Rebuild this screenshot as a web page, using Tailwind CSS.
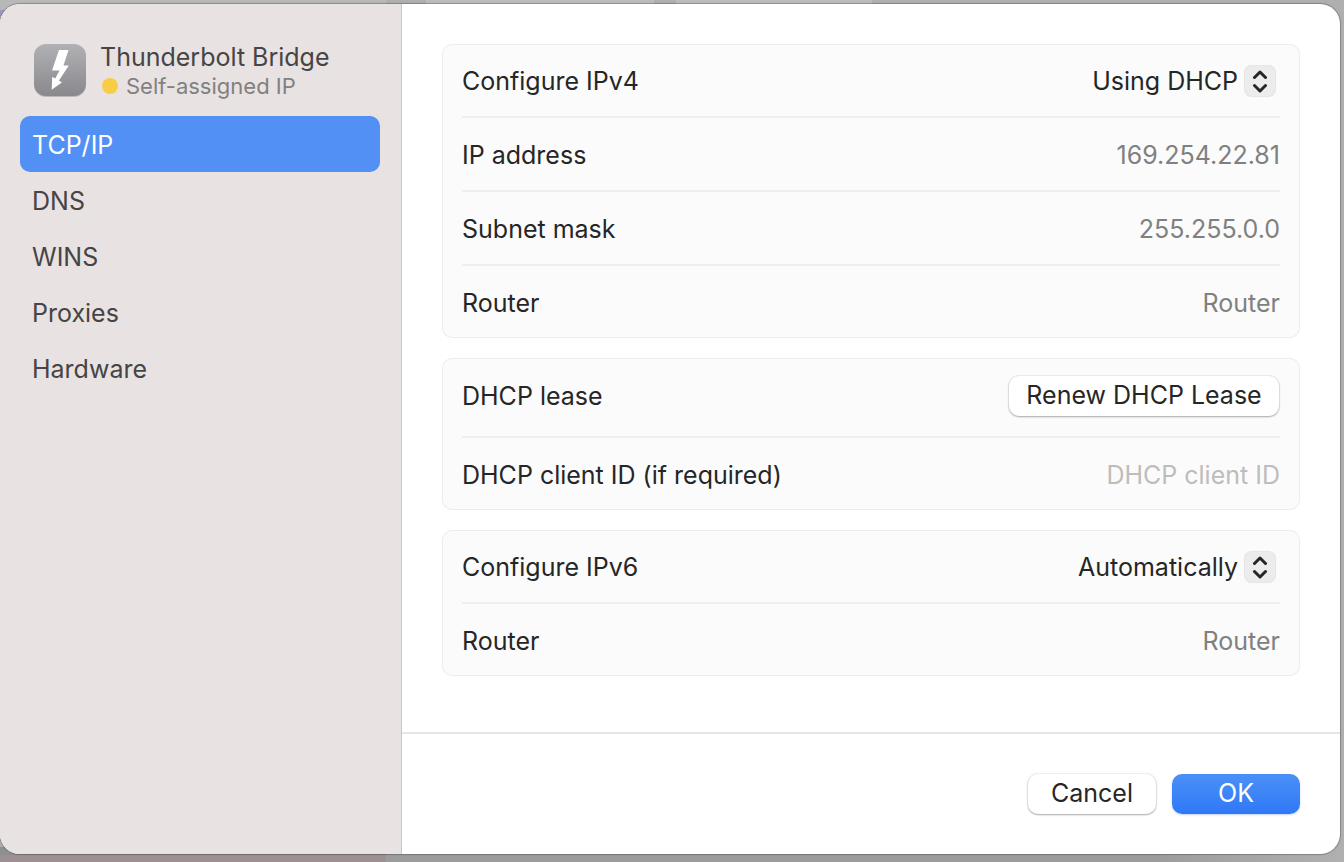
<!DOCTYPE html>
<html lang="en">
<head>
<meta charset="utf-8">
<meta name="viewport" content="width=device-width, initial-scale=1">
<title>Thunderbolt Bridge</title>
<script src="https://cdn.jsdelivr.net/npm/@tailwindcss/browser@4"></script>
</head>
<body class="relative isolate flex h-screen flex-col overflow-hidden bg-[#b0afaf] pt-1 pr-1 pb-2 font-['Inter',sans-serif] text-[25px] leading-8 text-[#262626]">
  <!-- Dimmed desktop behind the sheet -->
  <div class="absolute inset-0 -z-10 flex flex-col justify-between" aria-hidden="true">
    <div class="flex h-10">
      <div class="h-full w-[386px] bg-[linear-gradient(#b8b8b8_10px,#9a98bd_10px,#9a98bd_16px,#b8b8b8_16px)]"></div>
      <div class="ml-10 h-full w-[228px] bg-[#bcbcbc]"></div>
      <div class="ml-[22px] h-full w-[196px] bg-[#bcbcbc]"></div>
    </div>
    <div class="flex h-[15px]">
      <div class="h-full w-[386px] bg-[linear-gradient(#8d8f90_8px,#9d8f92_8px)]"></div>
      <div class="h-full flex-1 bg-[linear-gradient(to_right,#9c9c9c_80%,#b0b0b0)]"></div>
    </div>
  </div>

  <div class="flex min-h-0 flex-1 overflow-hidden rounded-[20px] bg-white shadow-[0_0_1px_1px_rgba(0,0,0,0.25)]">
    <aside class="w-[402px] shrink-0 border-r border-[#cbc5c5] bg-[#e8e2e2] pt-9 pr-[21px] pl-5 text-[#464444]">
      <header class="flex h-[76px] gap-[14px] pl-[14px]">
        <svg class="mt-1 h-14 w-[52px] shrink-0" viewBox="0 0 52 56" aria-hidden="true">
          <defs><linearGradient id="tile" x1="0" y1="0" x2="0" y2="1"><stop offset="0" stop-color="#b1b0b5"/><stop offset="1" stop-color="#89888d"/></linearGradient></defs>
          <rect x="0" y="1" width="52" height="52" rx="12" fill="#000" opacity=".18"/>
          <rect width="52" height="52" rx="12" fill="url(#tile)"/>
          <path d="M25 6H34.500L29.500 21.500H34.800L25 36.500L27.800 38.500L17.700 45.800L18.200 32.800L21.200 34.500L25.500 26.500H18Z" fill="#fff"/>
        </svg>
        <div class="pt-px">
          <h1 class="whitespace-nowrap">Thunderbolt Bridge</h1>
          <p class="flex items-center gap-2 whitespace-nowrap text-[22px] leading-[26px] text-[#828080]"><span class="ml-0.5 size-4 rounded-full bg-[#f7cd46]"></span>Self-assigned IP</p>
        </div>
      </header>
      <nav class="flex flex-col" aria-label="Settings sections">
        <a href="#tcpip" aria-current="page" class="flex h-14 items-center rounded-[10px] bg-[#5290f5] px-3 pt-0.5 text-white">TCP/IP</a>
        <a href="#dns" class="flex h-14 items-center px-3 pt-0.5">DNS</a>
        <a href="#wins" class="flex h-14 items-center px-3 pt-0.5">WINS</a>
        <a href="#proxies" class="flex h-14 items-center px-3 pt-0.5">Proxies</a>
        <a href="#hardware" class="flex h-14 items-center px-3 pt-0.5">Hardware</a>
      </nav>
    </aside>

    <form class="flex min-w-0 flex-1 flex-col">
      <div class="flex flex-1 flex-col gap-5 px-10 pt-10">
        <section class="rounded-[10px] bg-[#fbfbfb] px-5 inset-ring inset-ring-[#ededed]">
          <div class="flex h-[74px] items-center justify-between border-b-2 border-[#eeeeee] pt-0.5">
            <label for="ipv4">Configure IPv4</label>
            <div class="relative mr-1 flex items-center">
              <select id="ipv4" class="appearance-none bg-transparent pr-[38px] text-right"><option>Using DHCP</option></select>
              <span class="pointer-events-none absolute right-0 flex size-8 items-center justify-center rounded-lg bg-[#ececec] inset-ring inset-ring-[#e5e5e5]">
                <svg class="size-6" viewBox="0 0 24 24" fill="none" stroke="#262626" stroke-width="3" stroke-linecap="round" stroke-linejoin="round" aria-hidden="true"><path d="M6.500 8.500 12 3l5.500 5.500M6.500 16.500l5.500 5.500 5.500-5.500"/></svg>
              </span>
            </div>
          </div>
          <div class="flex h-[74px] items-center justify-between border-b-2 border-[#eeeeee] pt-0.5">
            <span>IP address</span><span class="text-[#808080]">169.254.22.81</span>
          </div>
          <div class="flex h-[74px] items-center justify-between border-b-2 border-[#eeeeee] pt-0.5">
            <span>Subnet mask</span><span class="text-[#808080]">255.255.0.0</span>
          </div>
          <div class="flex h-[72px] items-center justify-between pt-0.5">
            <span>Router</span><span class="text-[#808080]">Router</span>
          </div>
        </section>

        <section class="rounded-[10px] bg-[#fbfbfb] px-5 inset-ring inset-ring-[#ededed]">
          <div class="flex h-20 items-center justify-between border-b-2 border-[#eeeeee] pb-0.5">
            <span>DHCP lease</span>
            <button type="button" class="mr-px h-10 w-[270px] rounded-[10px] bg-white pb-0.5 whitespace-nowrap shadow-[0_0_1px_1px_rgba(0,0,0,0.06),0_1px_2px_rgba(0,0,0,0.3)]">Renew DHCP Lease</button>
          </div>
          <div class="flex h-[72px] items-center justify-between pt-0.5">
            <label for="client" class="shrink-0">DHCP client ID (if required)</label>
            <input id="client" type="text" placeholder="DHCP client ID" class="min-w-0 flex-1 bg-transparent text-right outline-none placeholder:text-[#bdbdbd]">
          </div>
        </section>

        <section class="rounded-[10px] bg-[#fbfbfb] px-5 inset-ring inset-ring-[#ededed]">
          <div class="flex h-[74px] items-center justify-between border-b-2 border-[#eeeeee] pt-0.5">
            <label for="ipv6">Configure IPv6</label>
            <div class="relative mr-1 flex items-center">
              <select id="ipv6" class="appearance-none bg-transparent pr-[38px] text-right"><option>Automatically</option></select>
              <span class="pointer-events-none absolute right-0 flex size-8 items-center justify-center rounded-lg bg-[#ececec] inset-ring inset-ring-[#e5e5e5]">
                <svg class="size-6" viewBox="0 0 24 24" fill="none" stroke="#262626" stroke-width="3" stroke-linecap="round" stroke-linejoin="round" aria-hidden="true"><path d="M6.500 8.500 12 3l5.500 5.500M6.500 16.500l5.500 5.500 5.500-5.500"/></svg>
              </span>
            </div>
          </div>
          <div class="flex h-[72px] items-center justify-between pt-0.5">
            <span>Router</span><span class="text-[#808080]">Router</span>
          </div>
        </section>
      </div>

      <footer class="flex h-[122px] shrink-0 items-center justify-end gap-4 border-t-2 border-[#e6e6e6] px-10">
        <button type="button" class="h-10 w-32 rounded-[10px] bg-white pb-0.5 shadow-[0_0_1px_1px_rgba(0,0,0,0.06),0_1px_2px_rgba(0,0,0,0.3)]">Cancel</button>
        <button type="submit" class="h-10 w-32 rounded-[10px] bg-linear-to-b from-[#4a90f7] to-[#3078f6] pb-0.5 text-white shadow-[0_1px_2px_rgba(48,120,246,0.3)]">OK</button>
      </footer>
    </form>
  </div>
</body>
</html>
